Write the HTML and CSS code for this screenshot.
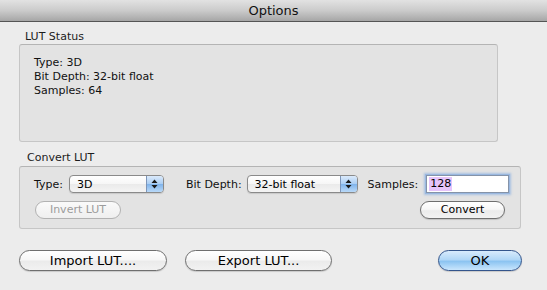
FILE: index.html
```html
<!DOCTYPE html>
<html>
<head>
<meta charset="utf-8">
<link rel="stylesheet" href="styles.css">
</head>
<body>
<div class="window">
  <div class="titlebar">Options</div>
  <div class="content">
    <div class="group-label">LUT Status</div>
    <div class="box status-box">
      <div>Type: 3D</div>
      <div>Bit Depth: 32-bit float</div>
      <div>Samples: 64</div>
    </div>
    <div class="group-label convert-label">Convert LUT</div>
    <div class="box convert-box">
      <div class="row row1">
        <span class="lbl">Type:</span>
        <div class="popup popup-type">
          <span class="popup-text">3D</span>
          <span class="popup-arrows">
            <svg width="7" height="10" viewBox="0 0 7 10"><path d="M3.5 0.5 L6.5 4 L0.5 4 Z M0.5 6 L6.5 6 L3.5 9.5 Z" fill="#1a1a1a"/></svg>
          </span>
        </div>
        <span class="lbl lbl-depth">Bit Depth:</span>
        <div class="popup popup-depth">
          <span class="popup-text">32-bit float</span>
          <span class="popup-arrows">
            <svg width="7" height="10" viewBox="0 0 7 10"><path d="M3.5 0.5 L6.5 4 L0.5 4 Z M0.5 6 L6.5 6 L3.5 9.5 Z" fill="#1a1a1a"/></svg>
          </span>
        </div>
        <span class="lbl lbl-samples">Samples:</span>
        <div class="field"><span class="sel">128</span></div>
      </div>
      <div class="row row2">
        <button class="btn small disabled">Invert LUT</button>
        <button class="btn small">Convert</button>
      </div>
    </div>
    <div class="bottom">
      <button class="btn big import">Import LUT....</button>
      <button class="btn big export">Export LUT...</button>
      <button class="btn big ok">OK</button>
    </div>
  </div>
</div>
</body>
</html>
```

FILE: styles.css
```css
html, body {
  margin: 0;
  padding: 0;
  background: #ececec;
}
body {
  width: 547px;
  height: 290px;
  overflow: hidden;
  font-family: "DejaVu Sans", "Liberation Sans", sans-serif;
  font-size: 11px;
  color: #000;
}
.window {
  width: 547px;
  height: 290px;
  background: #ececec;
}
.titlebar {
  height: 21px;
  line-height: 21px;
  text-align: center;
  font-size: 13px;
  color: #111;
  background: linear-gradient(#e2e2e2 0%, #cbcbcb 50%, #a6a6a6 100%);
  border-bottom: 1px solid #555;
}
.content {
  padding-left: 19px;
}
.group-label {
  line-height: 14px;
  margin-top: 8px;
  margin-left: 6px;
  color: #1c1c1c;
}
.convert-label {
  margin-top: 9px;
  margin-left: 8px;
}
.box {
  box-sizing: border-box;
  background: #e3e3e3;
  border: 1px solid #c6c6c6;
  border-top-color: #b4b4b4;
  border-radius: 3px;
}
.status-box {
  width: 479px;
  height: 98px;
  padding: 11px 0 0 14px;
  line-height: 14px;
  color: #111;
}
.convert-box {
  margin-top: 1px;
  width: 502px;
  height: 63px;
  padding: 8px 0 0 14px;
}
.row {
  display: flex;
  align-items: center;
}
.row1 {
  height: 18px;
}
.lbl {
  color: #111;
}
.popup {
  box-sizing: border-box;
  height: 18px;
  border: 1px solid #8a8a8a;
  border-radius: 4px;
  background: linear-gradient(#ffffff 0%, #f6f6f6 50%, #eaeaea 51%, #f4f4f4 100%);
  display: flex;
  align-items: center;
  overflow: hidden;
  box-shadow: 0 1px 1px rgba(0,0,0,0.12);
}
.popup-type {
  width: 95px;
  margin-left: 6px;
}
.popup-depth {
  width: 111px;
  margin-left: 5px;
}
.lbl-depth {
  margin-left: 22px;
}
.lbl-samples {
  margin-left: 10px;
}
.popup-text {
  flex: 1;
  padding-left: 7px;
  color: #000;
}
.popup-arrows {
  width: 16px;
  height: 16px;
  border-left: 1px solid #7d95b8;
  background: linear-gradient(#dbeafb 0%, #a9cdf3 50%, #7fb3eb 51%, #b9d9f8 100%);
  display: flex;
  align-items: center;
  justify-content: center;
}
.field {
  box-sizing: border-box;
  width: 83px;
  height: 18px;
  margin-left: 8px;
  background: #fff;
  border: 1px solid #8593a8;
  box-shadow: 0 0 0 1px #9ab8e0, 0 0 2px 2px rgba(120,165,225,0.55);
  padding: 1px 0 0 2px;
  line-height: 14px;
}
.sel {
  background: #e6c4fb;
  padding: 0 1px;
  display: inline-block;
  height: 14px;
}
.row2 {
  margin-top: 8px;
  justify-content: space-between;
  width: 471px;
}
.btn {
  box-sizing: border-box;
  font-family: "DejaVu Sans", "Liberation Sans", sans-serif;
  color: #000;
  border: 1px solid #6f6f6f;
  background: linear-gradient(#ffffff 0%, #f7f7f7 45%, #ebebeb 55%, #f2f2f2 100%);
  box-shadow: 0 1px 1px rgba(0,0,0,0.15);
  padding: 0;
  margin: 0;
}
.small {
  height: 18px;
  border-radius: 9px;
  font-size: 11px;
  line-height: 16px;
}
.row2 .small:first-child {
  width: 86px;
  margin-left: 1px;
}
.row2 .small:last-child {
  width: 85px;
}
.disabled {
  color: #9c9c9c;
  border-color: #b2b2b2;
  background: linear-gradient(#fafafa, #efefef);
  box-shadow: none;
}
.bottom {
  display: flex;
  margin-top: 21px;
  height: 21px;
}
.big {
  height: 21px;
  border-radius: 11px;
  font-size: 13px;
  line-height: 19px;
}
.import {
  width: 148px;
}
.export {
  width: 147px;
  margin-left: 18px;
}
.ok {
  width: 84px;
  margin-left: 106px;
  border-color: #33558c;
  background: linear-gradient(#d8ebfc 0%, #b1d7f7 45%, #8cc4f1 55%, #c9e6fd 100%);
}
```
